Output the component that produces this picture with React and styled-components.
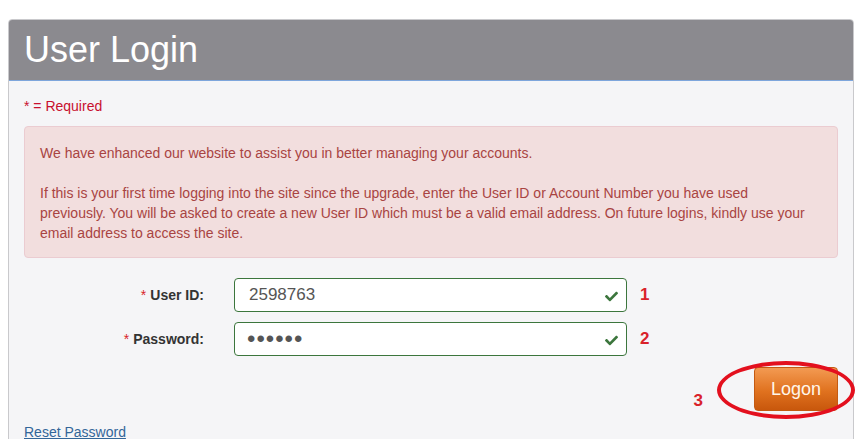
import React from 'react';
import styled, { createGlobalStyle } from 'styled-components';
import { FaCheck } from 'react-icons/fa';

const GlobalStyle = createGlobalStyle`
  html, body {
    margin: 0;
    padding: 0;
    background: #ffffff;
    font-family: "Liberation Sans", Arial, sans-serif;
  }
`

const Page = styled.div`
  padding: 19px 12px 0 8px;
  height: 439px;
  box-sizing: border-box;
  overflow: hidden;
`

const Panel = styled.section`
  border: 1px solid #c9c9cc;
  border-radius: 4px 4px 0 0;
  background: #f5f5f7;
  height: 440px;
`

const Header = styled.header`
  background: #8b8a8f;
  border-bottom: 1px solid #7ea6dc;
  border-radius: 3px 3px 0 0;
  height: 61px;
  box-sizing: border-box;
  padding: 9px 15px 0;
`

const Title = styled.h1`
  margin: 0;
  font-size: 36px;
  font-weight: normal;
  color: #ffffff;
  line-height: 42px;
`

const Body = styled.div`
  padding: 15px 15px 0;
`

const Required = styled.div`
  color: #c8102e;
  font-size: 14px;
  line-height: 20px;
  height: 20px;
  margin-bottom: 10px;
`

const Alert = styled.div`
  background: #f2dede;
  border: 1px solid #ebccd1;
  border-radius: 4px;
  color: #a94442;
  font-size: 14px;
  line-height: 20px;
  padding: 16px 15px 14px;

  p {
    margin: 0;
  }

  p + p {
    margin-top: 20px;
  }
`

const Form = styled.div`
  display: grid;
  grid-template-columns: 180px 393px 30px;
  column-gap: 30px;
  row-gap: 10px;
  margin-top: 20px;
  align-items: center;
`

const Label = styled.label`
  text-align: right;
  font-size: 14px;
  font-weight: bold;
  color: #333333;

  span {
    color: #d9222a;
    font-weight: normal;
    margin-right: 4px;
  }
`

const Field = styled.div`
  position: relative;
  height: 34px;
`

const Input = styled.input`
  width: 100%;
  height: 100%;
  box-sizing: border-box;
  border: 1px solid #3c763d;
  border-radius: 4px;
  background: #ffffff;
  padding: 0 40px 0 ${(p) => (p.$dots ? '12px' : '14px')};
  font-family: "Liberation Sans", Arial, sans-serif;
  font-size: ${(p) => (p.$dots ? '24px' : '17px')};
  color: #555555;
  letter-spacing: ${(p) => (p.$dots ? '1px' : '0')};
  outline: none;
`

const Check = styled(FaCheck)`
  position: absolute;
  right: 9px;
  top: 12px;
  color: #3c763d;
  font-size: 13px;
`

const Step = styled.span`
  color: #d9222a;
  font-weight: bold;
  font-size: 17px;
  margin-left: -17px;
`

const Actions = styled.div`
  display: flex;
  justify-content: flex-end;
  align-items: center;
  margin-top: 11px;
`

const ThreeStep = styled(Step)`
  margin: 24px 51px 0 0;
`

const Circled = styled.div`
  position: relative;
`

const Ring = styled.div`
  position: absolute;
  left: -37px;
  right: -17px;
  top: -6px;
  bottom: -8px;
  border: 4px solid #e3101e;
  border-radius: 50%;
  pointer-events: none;
`

const LogonButton = styled.button`
  display: block;
  width: 84px;
  height: 44px;
  border: 1px solid #c45a12;
  border-radius: 4px;
  background: linear-gradient(#f39a52, #e0721f 55%, #c8570c);
  color: #fff6ea;
  font-family: "Liberation Sans", Arial, sans-serif;
  font-size: 18px;
  padding: 0;
`

const ResetLink = styled.a`
  display: inline-block;
  margin-top: 13px;
  color: #336699;
  font-size: 14px;
  text-decoration: underline;
`

export default function App() {
  return (
    <Page>
      <GlobalStyle />
      <Panel>
        <Header>
          <Title>User Login</Title>
        </Header>
        <Body>
          <Required>* = Required</Required>
          <Alert>
            <p>We have enhanced our website to assist you in better managing your accounts.</p>
            <p>
              If this is your first time logging into the site since the upgrade, enter the User ID or Account Number you have used<br />
              previously. You will be asked to create a new User ID which must be a valid email address. On future logins, kindly use your<br />
              email address to access the site.
            </p>
          </Alert>
          <Form>
            <Label><span>*</span>User ID:</Label>
            <Field>
              <Input type="text" value="2598763" readOnly />
              <Check />
            </Field>
            <Step>1</Step>
            <Label><span>*</span>Password:</Label>
            <Field>
              <Input type="password" value="123456" readOnly $dots />
              <Check />
            </Field>
            <Step>2</Step>
          </Form>
          <Actions>
            <ThreeStep>3</ThreeStep>
            <Circled>
              <LogonButton>Logon</LogonButton>
              <Ring />
            </Circled>
          </Actions>
          <ResetLink href="#">Reset Password</ResetLink>
        </Body>
      </Panel>
    </Page>
  );
}
